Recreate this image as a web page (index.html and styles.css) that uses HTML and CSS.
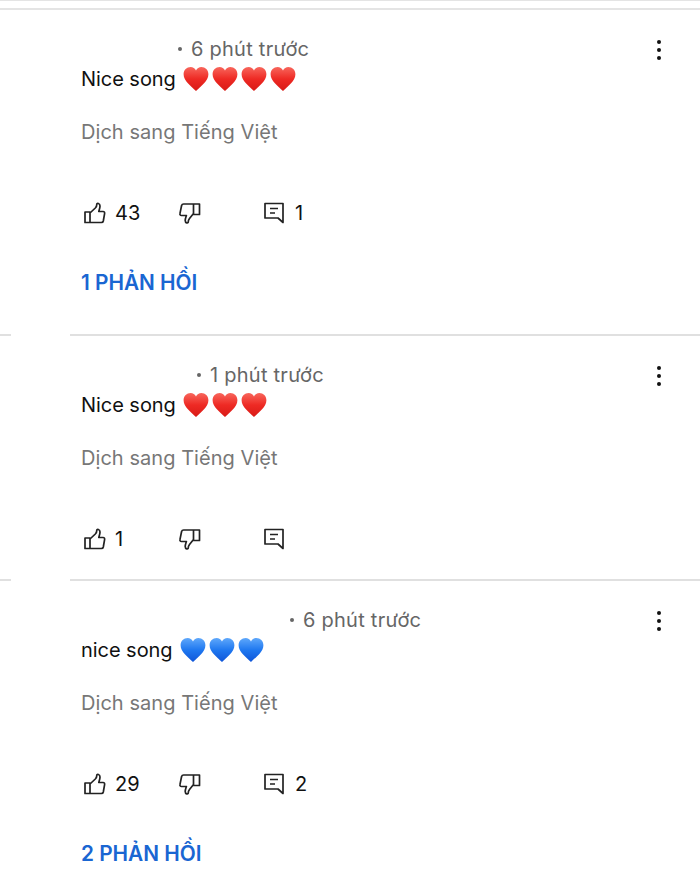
FILE: index.html
```html
<!DOCTYPE html>
<html lang="vi">

<head>
    <meta charset="UTF-8">
    <meta name="viewport" content="width=device-width, initial-scale=1.0">
    <title>Comments</title>
    <link rel="stylesheet" href="styles.css">
</head>

<body>
    <svg class="defs" width="0" height="0">
        <defs>
            <linearGradient id="red" x1="0" y1="0" x2="0" y2="1">
                <stop offset="0" stop-color="#f8665c" />
                <stop offset="0.5" stop-color="#ee2a24" />
                <stop offset="1" stop-color="#d81a16" />
            </linearGradient>
            <linearGradient id="blue" x1="0" y1="0" x2="0" y2="1">
                <stop offset="0" stop-color="#5fa8fb" />
                <stop offset="0.5" stop-color="#1f78f0" />
                <stop offset="1" stop-color="#0f55d8" />
            </linearGradient>
            <symbol id="heart" viewBox="0 0 26 26">
                <path d="M13 25C8 20 .6 15 .6 8.200 .6 4 3.800 1 7.600 1 10 1 12 2.300 13 4.500 14 2.300 16 1 18.400 1 22.200 1 25.400 4 25.400 8.200 25.400 15 18 20 13 25Z" />
            </symbol>
            <symbol id="like" viewBox="0 0 24 24">
                <path d="M2 11H7V21.500H2ZM7 12L12.300 7C13.500 5.800 13.800 4.500 13.800 3.200 13.800 1.900 17 2 17 5 17 7 16.200 9 15.800 10.500H20C21.400 10.500 21.800 11.500 21.600 12.600L20.300 20C20.100 21 19.400 21.500 18.400 21.500H7" />
            </symbol>
            <symbol id="dislike" viewBox="0 0 24 24">
                <path d="M21.500 13.500H15.500V3H21.500ZM15.500 12.500L11.500 17.500C10.500 18.700 10.200 20 10.200 21.200 10.200 22.300 7.200 22.300 7.200 19.500 7.200 17.700 8 16 8.400 14.500H3.500C2.200 14.500 1.700 13.500 2 12.400L3.600 4.500C3.900 3.500 4.600 3 5.600 3H15.500" />
            </symbol>
            <symbol id="reply" viewBox="0 0 24 24">
                <path d="M3 2.500H21V21.500L16 17H3ZM8 7.500H16M8 12H13" />
            </symbol>
        </defs>
    </svg>

    <div class="rule rule-top"></div>
    <div class="rule"></div>

    <div class="comment comment-first">
        <div class="meta">
            <span class="name name-a"></span>
            <span class="sep"></span>
            <span class="time">6 phút trước</span>
            <div class="dots"><i></i><i></i><i></i></div>
        </div>
        <p class="text">Nice song
            <span class="hearts">
                <svg class="heart red"><use href="#heart" /></svg><svg class="heart red"><use href="#heart" /></svg><svg class="heart red"><use href="#heart" /></svg><svg class="heart red"><use href="#heart" /></svg>
            </span>
        </p>
        <p class="translate">Dịch sang Tiếng Việt</p>
        <div class="actions">
            <div class="act act-like"><svg class="icon"><use href="#like" /></svg><span>43</span></div>
            <div class="act act-down"><svg class="icon"><use href="#dislike" /></svg></div>
            <div class="act"><svg class="icon"><use href="#reply" /></svg><span>1</span></div>
        </div>
        <p class="replies">1 PHẢN HỒI</p>
    </div>

    <div class="rule rule-split"><i></i><i></i></div>

    <div class="comment comment-mid">
        <div class="meta">
            <span class="name name-b"></span>
            <span class="sep"></span>
            <span class="time">1 phút trước</span>
            <div class="dots"><i></i><i></i><i></i></div>
        </div>
        <p class="text">Nice song
            <span class="hearts">
                <svg class="heart red"><use href="#heart" /></svg><svg class="heart red"><use href="#heart" /></svg><svg class="heart red"><use href="#heart" /></svg>
            </span>
        </p>
        <p class="translate">Dịch sang Tiếng Việt</p>
        <div class="actions">
            <div class="act act-like"><svg class="icon"><use href="#like" /></svg><span>1</span></div>
            <div class="act act-down"><svg class="icon"><use href="#dislike" /></svg></div>
            <div class="act"><svg class="icon"><use href="#reply" /></svg></div>
        </div>
    </div>

    <div class="rule rule-split"><i></i><i></i></div>

    <div class="comment">
        <div class="meta">
            <span class="name name-c"></span>
            <span class="sep"></span>
            <span class="time">6 phút trước</span>
            <div class="dots"><i></i><i></i><i></i></div>
        </div>
        <p class="text">nice song
            <span class="hearts">
                <svg class="heart blue"><use href="#heart" /></svg><svg class="heart blue"><use href="#heart" /></svg><svg class="heart blue"><use href="#heart" /></svg>
            </span>
        </p>
        <p class="translate">Dịch sang Tiếng Việt</p>
        <div class="actions">
            <div class="act act-like"><svg class="icon"><use href="#like" /></svg><span>29</span></div>
            <div class="act act-down"><svg class="icon"><use href="#dislike" /></svg></div>
            <div class="act"><svg class="icon"><use href="#reply" /></svg><span>2</span></div>
        </div>
        <p class="replies">2 PHẢN HỒI</p>
    </div>
</body>

</html>
```

FILE: styles.css
```css
html, body {
    margin: 0;
    padding: 0;
}

body {
    background-color: white;
    color: #111;
    font-family: "Inter", "Liberation Sans", sans-serif;
    height: 889px;
    overflow: hidden;
}

p {
    margin: 0;
}

.defs {
    display: block;
    height: 0;
}

.rule {
    height: 2px;
    background-color: #e4e4e4;
}

.rule-top {
    height: 1px;
    margin-bottom: 7px;
}

.rule-split {
    display: flex;
    justify-content: space-between;
    background-color: transparent;
}

.rule-split i {
    display: block;
    width: 630px;
    background-color: #e0e0e0;
}

.rule-split i:first-child {
    width: 11px;
}

.comment {
    padding: 26px 0 0 82px;
}

.comment-first {
    height: 298px;
}

.comment-mid {
    height: 217px;
}

.meta {
    display: flex;
    align-items: center;
    height: 26px;
    position: relative;
}

.name-a {
    width: 96px;
}

.name-b {
    width: 115px;
}

.name-c {
    width: 208px;
}

.sep {
    width: 4px;
    height: 4px;
    margin-right: 9px;
    border-radius: 50%;
    background-color: #666;
}

.time {
    font-size: 20px;
    letter-spacing: 0.25px;
    color: #666;
}

.dots {
    position: absolute;
    right: 39px;
    top: 4px;
    display: flex;
    flex-direction: column;
    gap: 4px;
}

.dots i {
    display: block;
    width: 4px;
    height: 4px;
    border-radius: 50%;
    background-color: #111;
}

.text {
    display: flex;
    align-items: center;
    gap: 7px;
    height: 30px;
    font-size: 20px;
    letter-spacing: -0.05px;
    margin: 2px 0 0 -1px;
}

.hearts {
    display: flex;
    gap: 3px;
}

.heart {
    width: 26px;
    height: 26px;
}

.red {
    fill: url(#red);
}

.blue {
    fill: url(#blue);
}

.translate {
    font-size: 20px;
    letter-spacing: 0.05px;
    color: #777;
    margin: 25px 0 0 -1px;
    line-height: 26px;
}

.actions {
    display: flex;
    align-items: center;
    margin-top: 55px;
    height: 26px;
}

.act {
    display: flex;
    align-items: center;
    gap: 9px;
    font-size: 20px;
}

.act-like {
    width: 96px;
    gap: 8px;
}

.act-like svg {
    margin-left: 1px;
}

.act-down {
    width: 84px;
}

.icon {
    width: 24px;
    height: 24px;
    fill: none;
    stroke: #222;
    stroke-width: 1.7;
    stroke-linejoin: round;
}

.replies {
    color: #1a66d2;
    font-size: 20.8px;
    font-weight: 600;
    margin: 44px 0 0 -1px;
}
```
